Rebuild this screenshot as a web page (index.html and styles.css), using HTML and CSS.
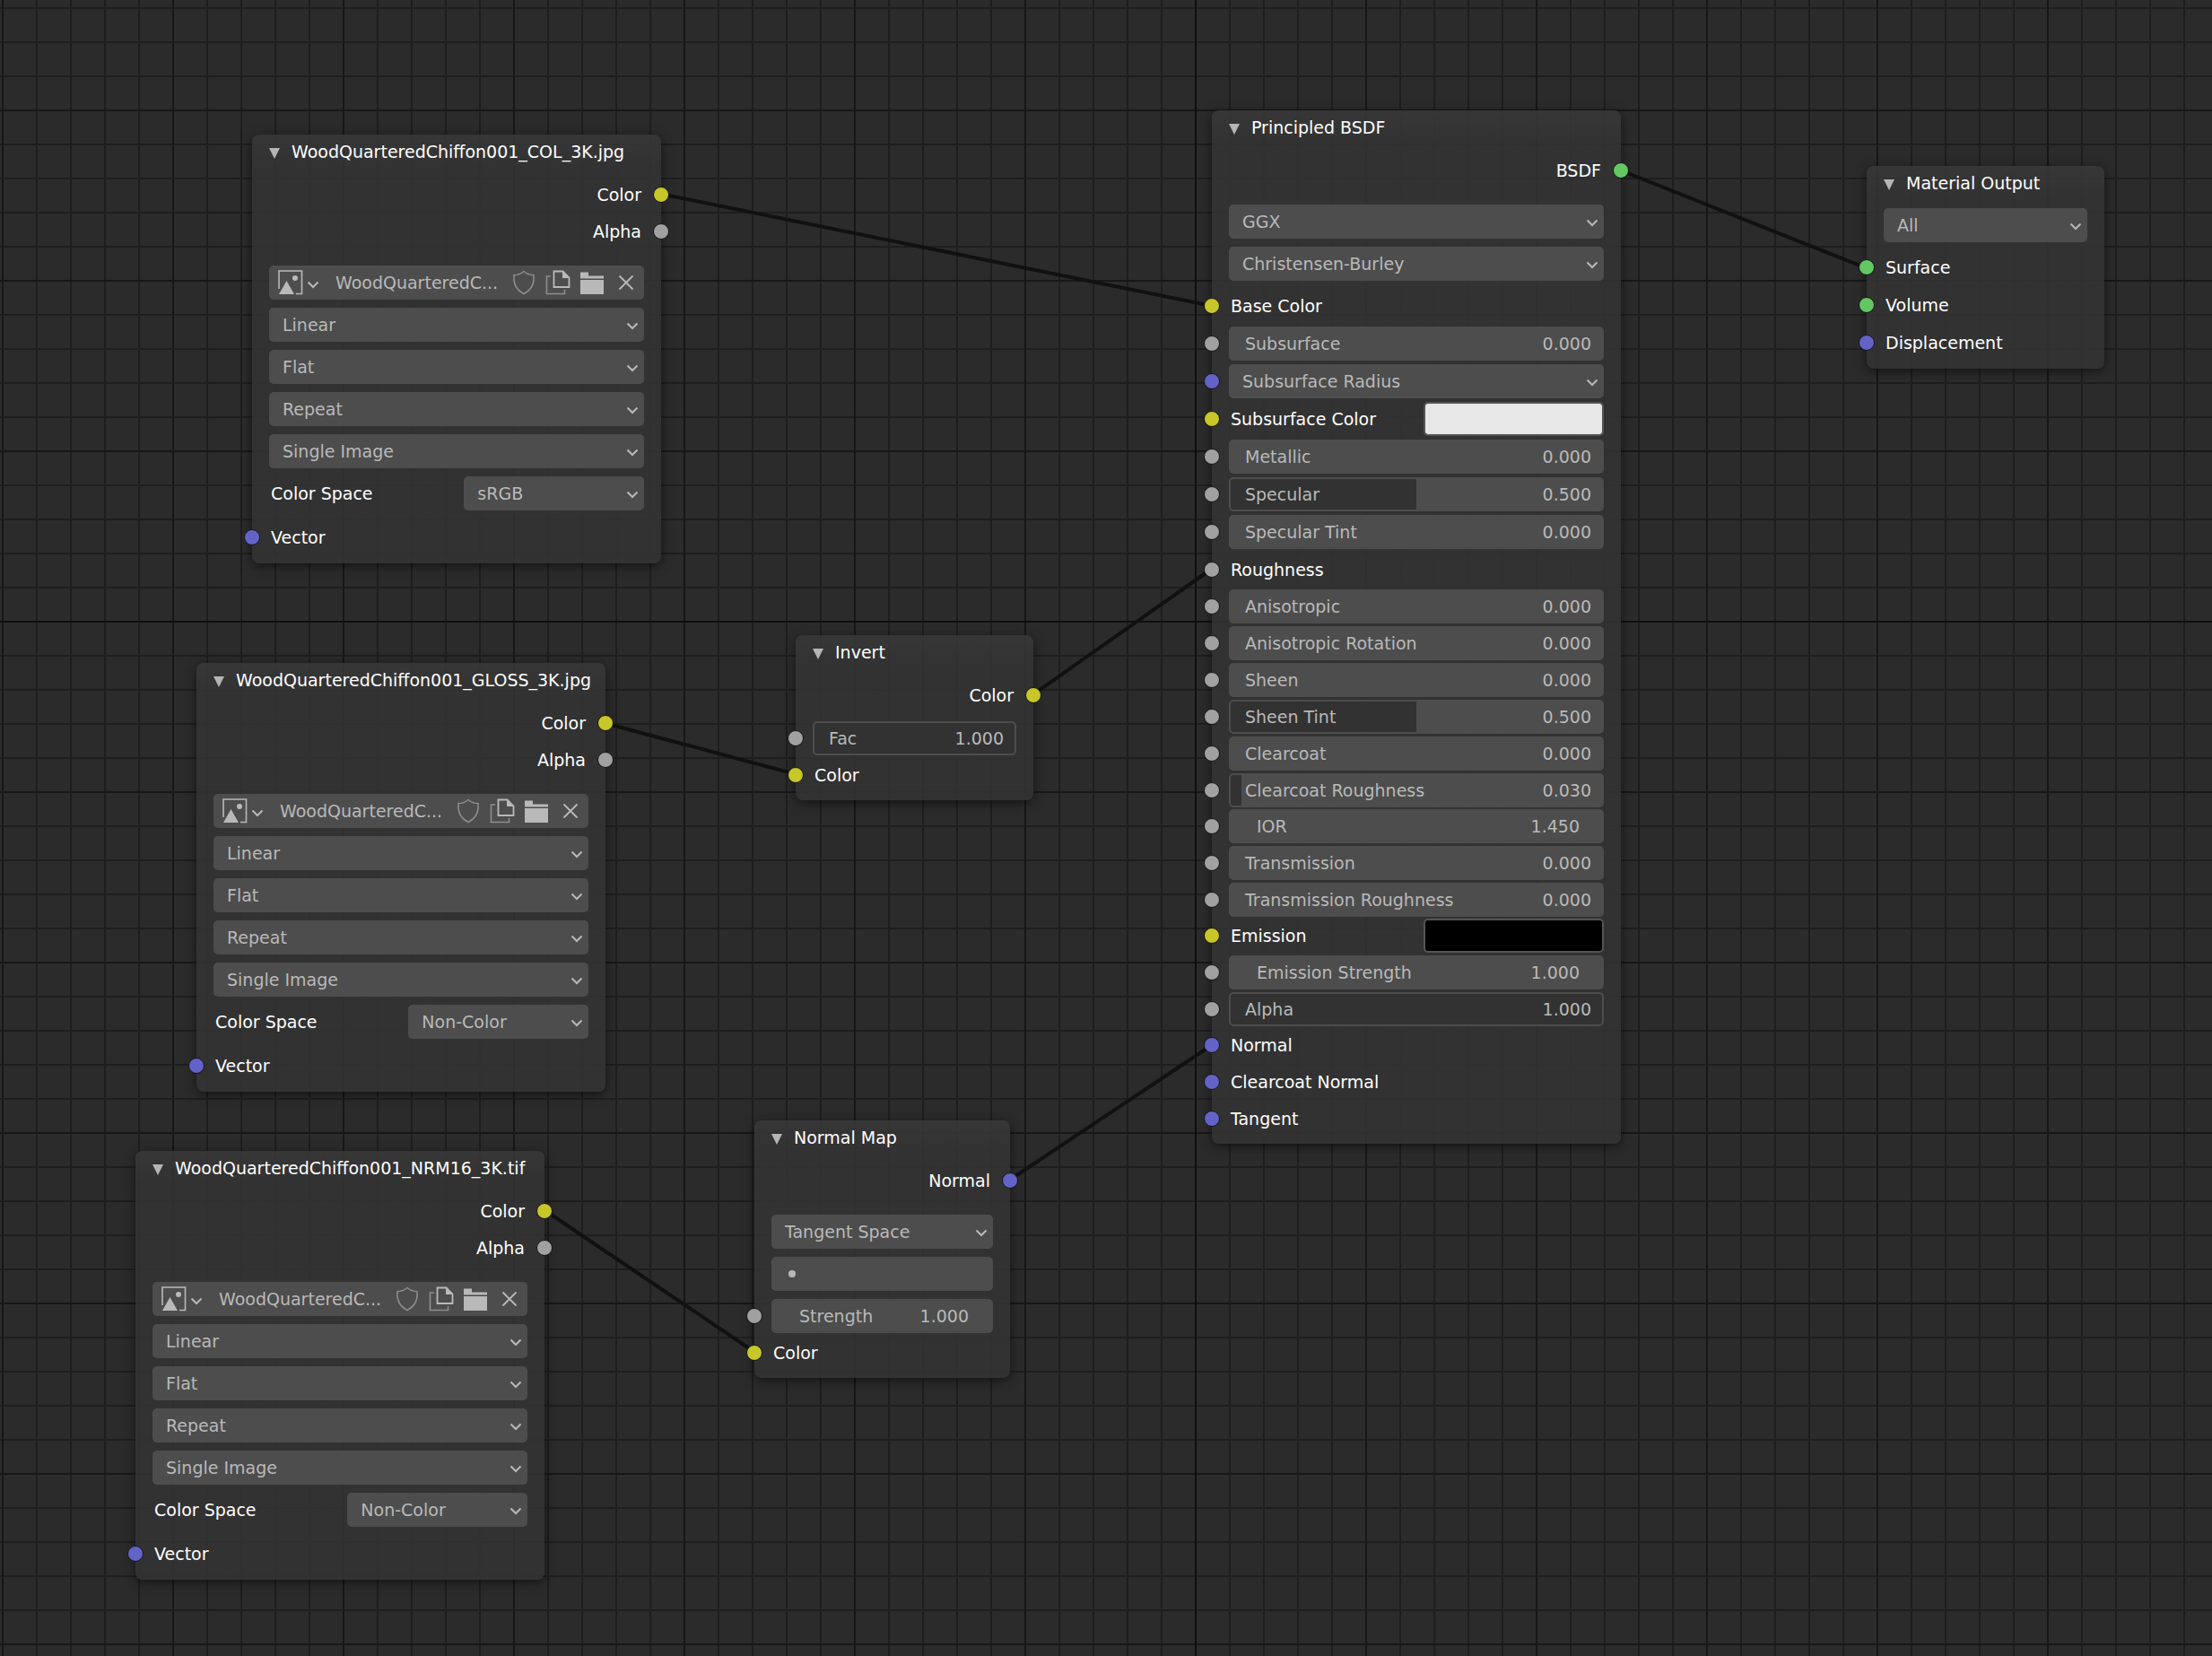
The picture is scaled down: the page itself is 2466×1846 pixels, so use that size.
FILE: index.html
```html
<!DOCTYPE html>
<html lang="en">
<head>
    <meta charset="UTF-8">
    <meta name="viewport" content="width=device-width, initial-scale=1.0">
    <title>Shader Editor</title>
    <link rel="stylesheet" href="styles.css">
</head>
<body>
    <!-- Shared icons -->
    <svg class="icon-defs" aria-hidden="true">
        <symbol id="icon-collapse" viewBox="0 0 12 12">
            <path d="M0 0h12L6 12z" fill="currentColor"/>
        </symbol>
        <symbol id="icon-chevron" viewBox="0 0 14 9">
            <path d="M1.500 1.500L7 7l5.500-5.500" fill="none" stroke="currentColor" stroke-width="2"/>
        </symbol>
        <symbol id="icon-image" viewBox="0 0 28 28">
            <path d="M1 21V1h25.500v25.500H20" fill="none" stroke="currentColor" stroke-width="1.600"/>
            <path d="M1 27L9.500 12 18 27z" fill="currentColor"/>
            <circle cx="19" cy="9" r="3" fill="currentColor"/>
        </symbol>
        <symbol id="icon-shield" viewBox="0 0 28 28">
            <path d="M14 1.500c3 2.700 6.500 4 11 4.300.8 9-2.500 16.500-11 20.700C5.500 22.300 2.200 14.800 3 5.800c4.500-.3 8-1.600 11-4.300z" fill="none" stroke="currentColor" stroke-width="1.600"/>
        </symbol>
        <symbol id="icon-copy" viewBox="0 0 28 28">
            <path d="M6 7H1.500v19.500h20V22" fill="none" stroke="currentColor" stroke-width="1.600" opacity=".6"/>
            <path d="M9.500 1.500h10l7 7v10.500h-17z" fill="none" stroke="currentColor" stroke-width="1.800"/>
            <path d="M19 1l8 8h-8z" fill="currentColor"/>
        </symbol>
        <symbol id="icon-folder" viewBox="0 0 28 28">
            <path d="M1 2.500h9v4h17v3H1zM1 11h26v16H1z" fill="currentColor"/>
        </symbol>
        <symbol id="icon-close" viewBox="0 0 28 28">
            <path d="M6.500 6.500l15 15m0-15l-15 15" fill="none" stroke="currentColor" stroke-width="1.800"/>
        </symbol>
    </svg>

    <main class="canvas">
        <!-- Links between sockets -->
        <svg class="links" aria-hidden="true">
            <line x1="736" y1="216" x2="1351" y2="341"/>
            <line x1="674" y1="806" x2="887" y2="863"/>
            <line x1="1152" y1="774" x2="1351" y2="634"/>
            <line x1="607" y1="1349" x2="841" y2="1507"/>
            <line x1="1126" y1="1315" x2="1351" y2="1165"/>
            <line x1="1807" y1="190" x2="2081" y2="299"/>
        </svg>

        <!-- Image textures -->
        <section class="node image-node node-col">
            <header class="node-header">
                <button class="collapse" aria-label="Collapse"><svg><use href="#icon-collapse"/></svg></button>
                <h2>WoodQuarteredChiffon001_COL_3K.jpg</h2>
            </header>
            <ul class="outputs">
                <li>Color<i class="socket color"></i></li>
                <li>Alpha<i class="socket value"></i></li>
            </ul>
            <div class="fields">
                <div class="datablock">
                    <button class="browse" aria-label="Browse image"><svg class="icon"><use href="#icon-image"/></svg><svg class="chevron"><use href="#icon-chevron"/></svg></button>
                    <input type="text" value="WoodQuarteredC..." aria-label="Image name">
                    <button class="dim" aria-label="Fake user"><svg class="icon"><use href="#icon-shield"/></svg></button>
                    <button aria-label="New image"><svg class="icon"><use href="#icon-copy"/></svg></button>
                    <button aria-label="Open image"><svg class="icon"><use href="#icon-folder"/></svg></button>
                    <button aria-label="Unlink"><svg class="icon"><use href="#icon-close"/></svg></button>
                </div>
                <div class="dropdown"><select aria-label="Interpolation"><option>Linear</option></select><svg class="chevron"><use href="#icon-chevron"/></svg></div>
                <div class="dropdown"><select aria-label="Projection"><option>Flat</option></select><svg class="chevron"><use href="#icon-chevron"/></svg></div>
                <div class="dropdown"><select aria-label="Extension"><option>Repeat</option></select><svg class="chevron"><use href="#icon-chevron"/></svg></div>
                <div class="dropdown"><select aria-label="Source"><option>Single Image</option></select><svg class="chevron"><use href="#icon-chevron"/></svg></div>
                <div class="split">
                    <label for="space-col">Color Space</label>
                    <div class="dropdown"><select id="space-col"><option>sRGB</option></select><svg class="chevron"><use href="#icon-chevron"/></svg></div>
                </div>
            </div>
            <ul class="inputs">
                <li><i class="socket vector"></i><span>Vector</span></li>
            </ul>
        </section>

        <section class="node image-node node-gloss">
            <header class="node-header">
                <button class="collapse" aria-label="Collapse"><svg><use href="#icon-collapse"/></svg></button>
                <h2>WoodQuarteredChiffon001_GLOSS_3K.jpg</h2>
            </header>
            <ul class="outputs">
                <li>Color<i class="socket color"></i></li>
                <li>Alpha<i class="socket value"></i></li>
            </ul>
            <div class="fields">
                <div class="datablock">
                    <button class="browse" aria-label="Browse image"><svg class="icon"><use href="#icon-image"/></svg><svg class="chevron"><use href="#icon-chevron"/></svg></button>
                    <input type="text" value="WoodQuarteredC..." aria-label="Image name">
                    <button class="dim" aria-label="Fake user"><svg class="icon"><use href="#icon-shield"/></svg></button>
                    <button aria-label="New image"><svg class="icon"><use href="#icon-copy"/></svg></button>
                    <button aria-label="Open image"><svg class="icon"><use href="#icon-folder"/></svg></button>
                    <button aria-label="Unlink"><svg class="icon"><use href="#icon-close"/></svg></button>
                </div>
                <div class="dropdown"><select aria-label="Interpolation"><option>Linear</option></select><svg class="chevron"><use href="#icon-chevron"/></svg></div>
                <div class="dropdown"><select aria-label="Projection"><option>Flat</option></select><svg class="chevron"><use href="#icon-chevron"/></svg></div>
                <div class="dropdown"><select aria-label="Extension"><option>Repeat</option></select><svg class="chevron"><use href="#icon-chevron"/></svg></div>
                <div class="dropdown"><select aria-label="Source"><option>Single Image</option></select><svg class="chevron"><use href="#icon-chevron"/></svg></div>
                <div class="split">
                    <label for="space-gloss">Color Space</label>
                    <div class="dropdown"><select id="space-gloss"><option>Non-Color</option></select><svg class="chevron"><use href="#icon-chevron"/></svg></div>
                </div>
            </div>
            <ul class="inputs">
                <li><i class="socket vector"></i><span>Vector</span></li>
            </ul>
        </section>

        <section class="node image-node node-nrm">
            <header class="node-header">
                <button class="collapse" aria-label="Collapse"><svg><use href="#icon-collapse"/></svg></button>
                <h2>WoodQuarteredChiffon001_NRM16_3K.tif</h2>
            </header>
            <ul class="outputs">
                <li>Color<i class="socket color"></i></li>
                <li>Alpha<i class="socket value"></i></li>
            </ul>
            <div class="fields">
                <div class="datablock">
                    <button class="browse" aria-label="Browse image"><svg class="icon"><use href="#icon-image"/></svg><svg class="chevron"><use href="#icon-chevron"/></svg></button>
                    <input type="text" value="WoodQuarteredC..." aria-label="Image name">
                    <button class="dim" aria-label="Fake user"><svg class="icon"><use href="#icon-shield"/></svg></button>
                    <button aria-label="New image"><svg class="icon"><use href="#icon-copy"/></svg></button>
                    <button aria-label="Open image"><svg class="icon"><use href="#icon-folder"/></svg></button>
                    <button aria-label="Unlink"><svg class="icon"><use href="#icon-close"/></svg></button>
                </div>
                <div class="dropdown"><select aria-label="Interpolation"><option>Linear</option></select><svg class="chevron"><use href="#icon-chevron"/></svg></div>
                <div class="dropdown"><select aria-label="Projection"><option>Flat</option></select><svg class="chevron"><use href="#icon-chevron"/></svg></div>
                <div class="dropdown"><select aria-label="Extension"><option>Repeat</option></select><svg class="chevron"><use href="#icon-chevron"/></svg></div>
                <div class="dropdown"><select aria-label="Source"><option>Single Image</option></select><svg class="chevron"><use href="#icon-chevron"/></svg></div>
                <div class="split">
                    <label for="space-nrm">Color Space</label>
                    <div class="dropdown"><select id="space-nrm"><option>Non-Color</option></select><svg class="chevron"><use href="#icon-chevron"/></svg></div>
                </div>
            </div>
            <ul class="inputs">
                <li><i class="socket vector"></i><span>Vector</span></li>
            </ul>
        </section>

        <!-- Invert -->
        <section class="node node-invert">
            <header class="node-header">
                <button class="collapse" aria-label="Collapse"><svg><use href="#icon-collapse"/></svg></button>
                <h2>Invert</h2>
            </header>
            <ul class="outputs">
                <li>Color<i class="socket color"></i></li>
            </ul>
            <ul class="inputs tight">
                <li><i class="socket value"></i><label class="slider"><input type="range" min="0" max="1" step="0.001" value="1" style="--fill: 100%"><span>Fac</span><output>1.000</output></label></li>
                <li><i class="socket color"></i><span>Color</span></li>
            </ul>
        </section>

        <!-- Normal map -->
        <section class="node node-normal">
            <header class="node-header">
                <button class="collapse" aria-label="Collapse"><svg><use href="#icon-collapse"/></svg></button>
                <h2>Normal Map</h2>
            </header>
            <ul class="outputs">
                <li>Normal<i class="socket vector"></i></li>
            </ul>
            <div class="fields">
                <div class="dropdown"><select aria-label="Space"><option>Tangent Space</option></select><svg class="chevron"><use href="#icon-chevron"/></svg></div>
                <div class="uv-field"><i class="dot"></i><input type="text" aria-label="UV Map"></div>
            </div>
            <ul class="inputs tight">
                <li><i class="socket value"></i><label class="number"><span>Strength</span><input type="text" value="1.000"></label></li>
                <li><i class="socket color"></i><span>Color</span></li>
            </ul>
        </section>

        <!-- Principled BSDF -->
        <section class="node node-principled">
            <header class="node-header">
                <button class="collapse" aria-label="Collapse"><svg><use href="#icon-collapse"/></svg></button>
                <h2>Principled BSDF</h2>
            </header>
            <ul class="outputs">
                <li>BSDF<i class="socket shader"></i></li>
            </ul>
            <div class="fields">
                <div class="dropdown"><select aria-label="Distribution"><option>GGX</option></select><svg class="chevron"><use href="#icon-chevron"/></svg></div>
                <div class="dropdown"><select aria-label="Subsurface method"><option>Christensen-Burley</option></select><svg class="chevron"><use href="#icon-chevron"/></svg></div>
            </div>
            <ul class="inputs">
                <li><i class="socket color"></i><span>Base Color</span></li>
                <li><i class="socket value"></i><label class="slider"><input type="range" min="0" max="1" step="0.001" value="0"><span>Subsurface</span><output>0.000</output></label></li>
                <li><i class="socket vector"></i><div class="dropdown"><select aria-label="Subsurface Radius"><option>Subsurface Radius</option></select><svg class="chevron"><use href="#icon-chevron"/></svg></div></li>
                <li><i class="socket color"></i><div class="split"><label for="subsurface-color">Subsurface Color</label><input type="color" id="subsurface-color" value="#e7e7e7"></div></li>
                <li><i class="socket value"></i><label class="slider"><input type="range" min="0" max="1" step="0.001" value="0"><span>Metallic</span><output>0.000</output></label></li>
                <li><i class="socket value"></i><label class="slider"><input type="range" min="0" max="1" step="0.001" value="0.5" style="--fill: 50%"><span>Specular</span><output>0.500</output></label></li>
                <li><i class="socket value"></i><label class="slider"><input type="range" min="0" max="1" step="0.001" value="0"><span>Specular Tint</span><output>0.000</output></label></li>
            </ul>
            <ul class="inputs tight">
                <li><i class="socket value"></i><span>Roughness</span></li>
                <li><i class="socket value"></i><label class="slider"><input type="range" min="0" max="1" step="0.001" value="0"><span>Anisotropic</span><output>0.000</output></label></li>
                <li><i class="socket value"></i><label class="slider"><input type="range" min="0" max="1" step="0.001" value="0"><span>Anisotropic Rotation</span><output>0.000</output></label></li>
                <li><i class="socket value"></i><label class="slider"><input type="range" min="0" max="1" step="0.001" value="0"><span>Sheen</span><output>0.000</output></label></li>
                <li><i class="socket value"></i><label class="slider"><input type="range" min="0" max="1" step="0.001" value="0.5" style="--fill: 50%"><span>Sheen Tint</span><output>0.500</output></label></li>
                <li><i class="socket value"></i><label class="slider"><input type="range" min="0" max="1" step="0.001" value="0"><span>Clearcoat</span><output>0.000</output></label></li>
                <li><i class="socket value"></i><label class="slider"><input type="range" min="0" max="1" step="0.001" value="0.03" style="--fill: 3%"><span>Clearcoat Roughness</span><output>0.030</output></label></li>
                <li class="snug"><i class="socket value"></i><label class="number"><span>IOR</span><input type="text" value="1.450"></label></li>
                <li><i class="socket value"></i><label class="slider"><input type="range" min="0" max="1" step="0.001" value="0"><span>Transmission</span><output>0.000</output></label></li>
                <li><i class="socket value"></i><label class="slider"><input type="range" min="0" max="1" step="0.001" value="0"><span>Transmission Roughness</span><output>0.000</output></label></li>
                <li class="snug"><i class="socket color"></i><div class="split"><label for="emission">Emission</label><input type="color" id="emission" value="#000000"></div></li>
                <li><i class="socket value"></i><label class="number"><span>Emission Strength</span><input type="text" value="1.000"></label></li>
                <li><i class="socket value"></i><label class="slider"><input type="range" min="0" max="1" step="0.001" value="1" style="--fill: 100%"><span>Alpha</span><output>1.000</output></label></li>
                <li class="snug"><i class="socket vector"></i><span>Normal</span></li>
                <li><i class="socket vector"></i><span>Clearcoat Normal</span></li>
                <li><i class="socket vector"></i><span>Tangent</span></li>
            </ul>
        </section>

        <!-- Material output -->
        <section class="node node-output">
            <header class="node-header">
                <button class="collapse" aria-label="Collapse"><svg><use href="#icon-collapse"/></svg></button>
                <h2>Material Output</h2>
            </header>
            <div class="fields">
                <div class="dropdown"><select aria-label="Target"><option>All</option></select><svg class="chevron"><use href="#icon-chevron"/></svg></div>
            </div>
            <ul class="inputs">
                <li><i class="socket shader"></i><span>Surface</span></li>
                <li><i class="socket shader"></i><span>Volume</span></li>
                <li><i class="socket vector"></i><span>Displacement</span></li>
            </ul>
        </section>
    </main>
</body>
</html>
```
FILE: styles.css
```css
* {
    box-sizing: border-box;
}

body {
    margin: 0;
    font-family: "DejaVu Sans", Verdana, sans-serif;
    font-size: 19px;
    line-height: 38px;
    color: #fff;
    background: #2b2b2b;
}

ul {
    list-style: none;
    margin: 0;
    padding: 0;
}

button,
input,
select {
    font: inherit;
    color: inherit;
    margin: 0;
    padding: 0;
    border: none;
    background: none;
    outline: none;
}

.icon-defs {
    position: absolute;
    width: 0;
    height: 0;
}

/* Editor background: axes, major lines, minor lines */
.canvas {
    position: relative;
    min-height: 100vh;
    overflow: hidden;
    background-color: #2b2b2b;
    background-image:
        linear-gradient(to right, #0f0f0f 2px, transparent 2px),
        linear-gradient(to bottom, #0f0f0f 2px, transparent 2px),
        linear-gradient(to right, #171717 2px, transparent 2px),
        linear-gradient(to bottom, #171717 2px, transparent 2px),
        linear-gradient(to right, #1e1e1e 2px, transparent 2px),
        linear-gradient(to bottom, #1e1e1e 2px, transparent 2px);
    background-size: 100% 100%, 100% 100%, 190px 190px, 190px 190px, 38px 38px, 38px 38px;
    background-position: 1332px 0, 0 692px, 2px 0, 0 122px, 2px 0, 0 8px;
    background-repeat: no-repeat, no-repeat, repeat, repeat, repeat, repeat;
}

.links {
    position: absolute;
    inset: 0;
    width: 100%;
    height: 100%;
}

.links line {
    stroke: #111;
    stroke-width: 4;
}

/* Nodes */
.node {
    position: absolute;
    padding-bottom: 8px;
    border-radius: 8px;
    background: linear-gradient(rgba(56, 56, 56, 0.88), rgba(51, 51, 51, 0.88) 38px);
    box-shadow: 0 3px 12px rgba(0, 0, 0, 0.55);
}

.image-node,
.node-principled {
    width: 456px;
}

.node-invert,
.node-output {
    width: 265px;
}

.node-col {
    left: 281px;
    top: 150px;
}

.node-gloss {
    left: 219px;
    top: 739px;
}

.node-nrm {
    left: 151px;
    top: 1283px;
}

.node-invert {
    left: 887px;
    top: 708px;
}

.node-normal {
    left: 841px;
    top: 1249px;
    width: 285px;
}

.node-principled {
    left: 1351px;
    top: 123px;
}

.node-output {
    left: 2081px;
    top: 185px;
}

.node-header {
    display: flex;
    align-items: center;
    gap: 13px;
    padding: 0 19px;
}

.node-header h2 {
    margin: 0;
    font-size: 19px;
    font-weight: normal;
    white-space: nowrap;
}

.collapse {
    display: flex;
    padding-top: 4px;
    color: #b5b5b5;
}

.collapse svg {
    width: 12px;
    height: 12px;
}

/* Sockets */
.socket {
    position: absolute;
    width: 18px;
    height: 18px;
    border: 1px solid #161616;
    border-radius: 50%;
}

.socket.color {
    background: #c7c729;
}

.socket.value {
    background: #a1a1a1;
}

.socket.vector {
    background: #6363c7;
}

.socket.shader {
    background: #63c763;
}

.outputs {
    padding: 8px 22px 0;
}

.outputs li {
    position: relative;
    display: flex;
    align-items: center;
    justify-content: flex-end;
    height: 41px;
}

.outputs .socket {
    right: -31px;
}

.outputs + .fields {
    padding-top: 18px;
}

.inputs {
    padding: 7px 19px 0;
}

.inputs + .inputs {
    padding-top: 0;
}

.image-node .inputs {
    padding-top: 9px;
}

.inputs li {
    position: relative;
    display: flex;
    align-items: center;
    height: 42px;
}

.inputs.tight li {
    height: 41px;
}

.inputs.tight .snug {
    height: 40px;
}

.inputs .socket {
    left: -28px;
}

.inputs li > span {
    padding-left: 2px;
}

/* Fields */
.fields {
    display: flex;
    flex-direction: column;
    gap: 9px;
    padding: 0 19px;
}

.node-output .fields {
    padding-top: 9px;
}

.dropdown {
    position: relative;
    flex: 1;
    color: #b9b9b9;
}

.dropdown select {
    display: block;
    width: 100%;
    height: 38px;
    padding: 0 15px;
    border-radius: 5px;
    background: #4d4d4d;
    appearance: none;
}

.chevron {
    width: 14px;
    height: 9px;
}

.dropdown .chevron {
    position: absolute;
    right: 6px;
    top: 16px;
    pointer-events: none;
}

.split {
    display: grid;
    grid-template-columns: 52% 48%;
    align-items: center;
    flex: 1;
}

.split label {
    padding-left: 2px;
}

input[type="color"] {
    width: 100%;
    height: 38px;
    border: 2px solid #545454;
    border-radius: 5px;
    overflow: hidden;
    appearance: none;
}

input[type="color"]::-webkit-color-swatch-wrapper {
    padding: 0;
}

input[type="color"]::-webkit-color-swatch {
    border: none;
    border-radius: 2px;
}

/* Image selector row */
.datablock {
    display: flex;
    height: 38px;
    padding-right: 1px;
    border-radius: 5px;
    background: #4d4d4d;
    color: #b9b9b9;
}

.datablock input {
    flex: 1;
    min-width: 0;
}

.datablock button {
    display: flex;
    align-items: center;
    justify-content: center;
    width: 38px;
}

.datablock .browse {
    justify-content: flex-start;
    gap: 4px;
    width: 74px;
    padding-left: 10px;
}

.datablock .browse .chevron {
    margin-top: 4px;
}

.datablock .dim {
    color: #8c8c8c;
}

.icon {
    width: 28px;
    height: 28px;
}

/* Value sliders: the range input lies under its name and value */
.slider {
    display: grid;
    grid-template-columns: 1fr auto;
    flex: 1;
    height: 38px;
    padding: 2px;
    border-radius: 5px;
    background: #4d4d4d;
    color: #b9b9b9;
    line-height: 34px;
}

.slider input {
    grid-area: 1 / 1 / 2 / 3;
    width: 100%;
    height: 34px;
    border-radius: 3px;
    appearance: none;
    background: linear-gradient(#323232, #323232) no-repeat left / var(--fill, 0%) 100%;
}

.slider input::-webkit-slider-thumb {
    appearance: none;
    width: 1px;
    height: 34px;
    background: transparent;
}

.slider span {
    grid-area: 1 / 1;
    padding-left: 16px;
    pointer-events: none;
}

.slider output {
    grid-area: 1 / 2;
    padding-right: 12px;
    pointer-events: none;
}

.number {
    display: flex;
    flex: 1;
    min-width: 0;
    height: 38px;
    padding: 0 27px 0 31px;
    border-radius: 5px;
    background: #4d4d4d;
    color: #b9b9b9;
}

.number input {
    flex: 1;
    min-width: 0;
    text-align: right;
}

.uv-field {
    display: flex;
    align-items: center;
    gap: 10px;
    height: 38px;
    padding: 0 19px;
    border-radius: 5px;
    background: #4d4d4d;
}

.uv-field input {
    flex: 1;
    min-width: 0;
}

.dot {
    width: 8px;
    height: 8px;
    border-radius: 50%;
    background: #b9b9b9;
}
```
